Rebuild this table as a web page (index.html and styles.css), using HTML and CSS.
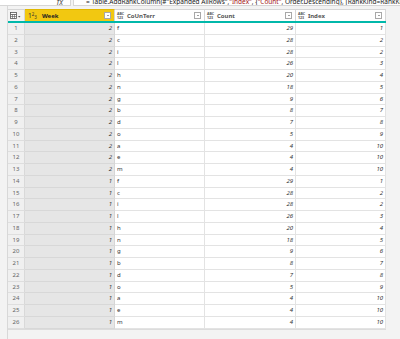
FILE: index.html
```html
<!DOCTYPE html>
<html>
<head>
<meta charset="utf-8">
<link rel="stylesheet" href="styles.css">
</head>
<body>
<div class="formula">
  <div class="fx-box"><span class="fx">ƒx</span></div>
  <div class="expr">= Table.AddRankColumn(#"Expanded AllRows", <span class="str">"Index"</span>, {<span class="str">"Count"</span>, Order.Descending}, [RankKind=RankKind.Dense])</div>
</div>
<div class="panel">
  <div class="table" id="tbl">
    <div class="hc rn">
      <svg width="11" height="7" viewBox="0 0 11 7"><rect x="0.5" y="0.5" width="6" height="6" fill="#fff" stroke="#555" stroke-width="0.8"/><line x1="0.5" y1="2.5" x2="6.5" y2="2.5" stroke="#555" stroke-width="0.8"/><line x1="0.5" y1="4.5" x2="6.5" y2="4.5" stroke="#555" stroke-width="0.6"/><line x1="2.5" y1="2.5" x2="2.5" y2="6.5" stroke="#555" stroke-width="0.6"/><line x1="4.5" y1="2.5" x2="4.5" y2="6.5" stroke="#555" stroke-width="0.6"/><path d="M8 4 L10.5 4 L9.25 5.5 Z" fill="#555"/></svg>
    </div>
    <div class="hc week">
      <span class="ti num">1<sup>2</sup><sub>3</sub></span><span class="name">Week</span><span class="dd"></span>
    </div>
    <div class="hc">
      <span class="ti abc"><span>ABC</span><span>123</span></span><span class="name">CoUnTerr</span><span class="dd"></span>
    </div>
    <div class="hc">
      <span class="ti abc"><span>ABC</span><span>123</span></span><span class="name">Count</span><span class="dd"></span>
    </div>
    <div class="hc">
      <span class="ti abc"><span>ABC</span><span>123</span></span><span class="name">Index</span><span class="dd"></span>
    </div>
    <div class="teal"></div>
  </div>
</div>
<script src="app.js"></script>
</body>
</html>
```

FILE: app.js
```js
(function () {
  var base = [
    ["f", 29, 1], ["c", 28, 2], ["i", 28, 2], ["l", 26, 3], ["h", 20, 4],
    ["n", 18, 5], ["g", 9, 6], ["b", 8, 7], ["d", 7, 8], ["o", 5, 9],
    ["a", 4, 10], ["e", 4, 10], ["m", 4, 10]
  ];
  var tbl = document.getElementById("tbl");
  var n = 1;
  [2, 1].forEach(function (w) {
    base.forEach(function (r) {
      var cells = [
        ["c rnum", n],
        ["c wk r", w],
        ["c", r[0]],
        ["c r", r[1]],
        ["c r", r[2]]
      ];
      cells.forEach(function (c) {
        var d = document.createElement("div");
        d.className = c[0];
        d.textContent = c[1];
        tbl.appendChild(d);
      });
      n++;
    });
  });
})();
```

FILE: styles.css
```css
html, body {
  margin: 0;
  padding: 0;
}
body {
  width: 400px;
  height: 339px;
  overflow: hidden;
  background: #f3f3f3;
  font-family: "Noto Sans", "DejaVu Sans", sans-serif;
  color: #333;
}
.formula {
  display: flex;
  height: 6px;
  gap: 2px;
}
.fx-box {
  width: 70px;
  background: #fff;
  border-right: 1px solid #d6d6d6;
  border-bottom: 1px solid #d6d6d6;
  position: relative;
  overflow: hidden;
}
.fx {
  position: absolute;
  left: 56px;
  bottom: -1px;
  font-size: 8px;
  font-style: italic;
  color: #555;
  line-height: 8px;
}
.expr {
  flex: 1;
  background: #fff;
  border-left: 1px solid #d6d6d6;
  border-bottom: 1px solid #d6d6d6;
  overflow: hidden;
  font-size: 6.5px;
  line-height: 6px;
  white-space: nowrap;
  padding-left: 12px;
  color: #222;
  display: flex;
  align-items: flex-end;
}
.expr .str {
  color: #a31515;
}
.panel {
  margin-left: 7px;
  border-left: 1px solid #d8d8d8;
  height: 333px;
  padding-top: 3px;
  box-sizing: border-box;
}
.table {
  display: grid;
  grid-template-columns: 17px 90px 90px 91px 90px;
  grid-template-rows: 12px 2px repeat(26, 11.75px);
  width: 378px;
  background: #fff;
  border-bottom: 1px solid #dcdcdc;
}
.hc {
  display: flex;
  align-items: center;
  background: #fff;
  border-right: 1px solid #d6d6d6;
  border-top: 1px solid #d6d6d6;
  box-sizing: border-box;
  position: relative;
  padding-left: 2px;
  font-size: 6px;
  color: #555;
}
.hc.rn {
  background: #f3f3f3;
  padding-left: 2px;
}
.hc.week {
  background: #f2c811;
  color: #222;
  font-weight: 700;
  border-top-color: #e0b800;
}
.ti {
  color: #555;
  margin-right: 3px;
}
.ti.num {
  font-size: 6.5px;
  font-weight: 400;
  color: #333;
  padding-left: 1px;
  margin-right: 5px;
  line-height: 6px;
}
.ti.num sup {
  font-size: 4.5px;
  vertical-align: 2px;
}
.ti.num sub {
  font-size: 4.5px;
  vertical-align: -1px;
}
.ti.abc {
  display: flex;
  flex-direction: column;
  font-size: 3.6px;
  line-height: 3.8px;
  font-weight: 700;
  letter-spacing: -0.1px;
}
.name {
  font-weight: 700;
}
.hc .name {
  color: #555;
}
.hc.week .name {
  color: #222;
}
.dd {
  position: absolute;
  right: 3px;
  top: 2px;
  width: 7px;
  height: 7px;
  box-sizing: border-box;
  border: 1px solid #a8a8a8;
  background: #fff;
}
.dd::after {
  content: "";
  position: absolute;
  left: 1.5px;
  top: 2px;
  border-left: 1.5px solid transparent;
  border-right: 1.5px solid transparent;
  border-top: 1.5px solid #444;
}
.teal {
  grid-column: 1 / -1;
  background: #01b8aa;
}
.c {
  box-sizing: border-box;
  border-right: 1px solid #e3e3e3;
  border-bottom: 1px solid #e3e3e3;
  font-size: 6px;
  line-height: 10.75px;
  padding: 0 2px;
  white-space: nowrap;
  overflow: hidden;
  color: #333;
}
.c.r {
  text-align: right;
  font-style: italic;
}
.c.rnum {
  background: #f0f0f0;
  color: #666;
  text-align: center;
  border-right-color: #d9d9d9;
  border-bottom-color: #dedede;
}
.c.wk {
  background: #e6e6e6;
  border-bottom-color: #d8d8d8;
  border-right-color: #d6d6d6;
}
```
